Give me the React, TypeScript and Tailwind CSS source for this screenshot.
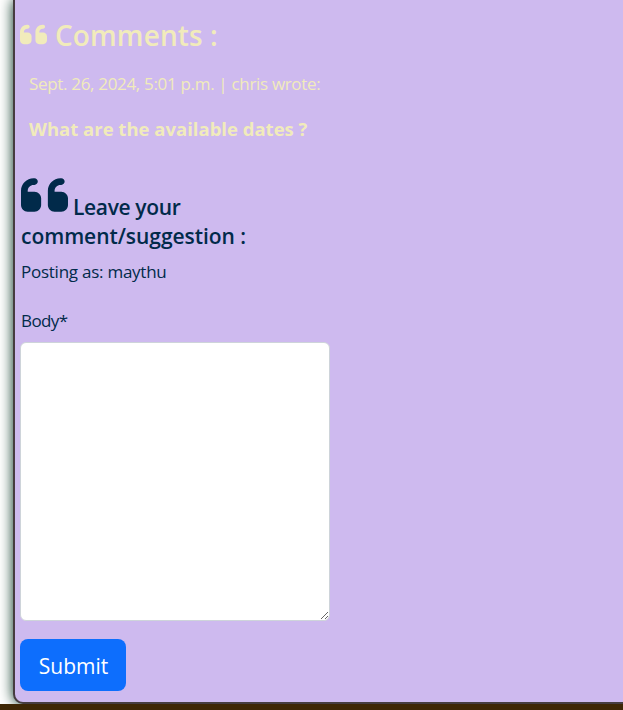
import { FaQuoteLeft } from 'react-icons/fa6';

function Comments() {
  return (
    <section className="text-[#f1ebbb]">
      <h3 className="flex h-10 items-center whitespace-nowrap text-[28px] font-semibold leading-10">
        <FaQuoteLeft className="h-[31px] w-[27px] shrink-0" />
        <span className="ml-2 pt-[2px] tracking-[0.1px]">Comments :</span>
      </h3>
      <div className="ml-[9px] mt-4 whitespace-nowrap">
        <p className="text-[17px] leading-7 tracking-[-0.32px]">
          Sept. 26, 2024, 5:01 p.m. | chris wrote:
        </p>
        <p className="mt-[17px] text-[18.5px] font-bold leading-7">
          What are the available dates ?
        </p>
      </div>
    </section>
  );
}

function CommentForm() {
  return (
    <form className="mt-[34px] text-[#012a4a]">
      <h4 className="whitespace-nowrap text-[21px] font-semibold leading-[29px]">
        <span className="flex h-[45px] items-end tracking-[-0.35px]">
          <FaQuoteLeft className="ml-[0.5px] h-[54px] w-[47px] shrink-0" />
          <span className="ml-[5.5px]">Leave your</span>
        </span>
        <span className="ml-px block tracking-[-0.05px]">comment/suggestion :</span>
      </h4>
      <p className="ml-px mt-[7px] text-[17px] leading-7 tracking-[-0.25px]">Posting as: maythu</p>
      <label htmlFor="body" className="ml-px mt-[21px] block text-[17px] leading-7 tracking-[-0.6px]">
        Body*
      </label>
      <textarea
        id="body"
        className="mt-[7px] block h-[279px] w-[310px] resize rounded-md border border-[#ced4da] bg-white outline-none"
      />
      <button
        type="button"
        className="mt-[18px] block h-[52px] w-[106px] rounded-lg bg-[#0d6efd] pl-px text-[21px] leading-[54px] text-white"
      >
        Submit
      </button>
    </form>
  );
}

export default function App() {
  return (
    <div className="flex h-[710px] w-[623px] flex-col overflow-hidden bg-white font-['Open_Sans','Noto_Sans',sans-serif]">
      <div className="h-[704px] shrink-0 overflow-hidden pl-[13px]">
        <main className="h-[704px] w-[640px] rounded-bl-[10px] border-b-2 border-l-2 border-[#463c40] bg-[#cebaef] pl-[5px] pt-[14px] shadow-[0_0_14px_#01301e]">
          <Comments />
          <CommentForm />
        </main>
      </div>
      <footer className="h-[6px] bg-[#3e2605]" />
    </div>
  );
}
